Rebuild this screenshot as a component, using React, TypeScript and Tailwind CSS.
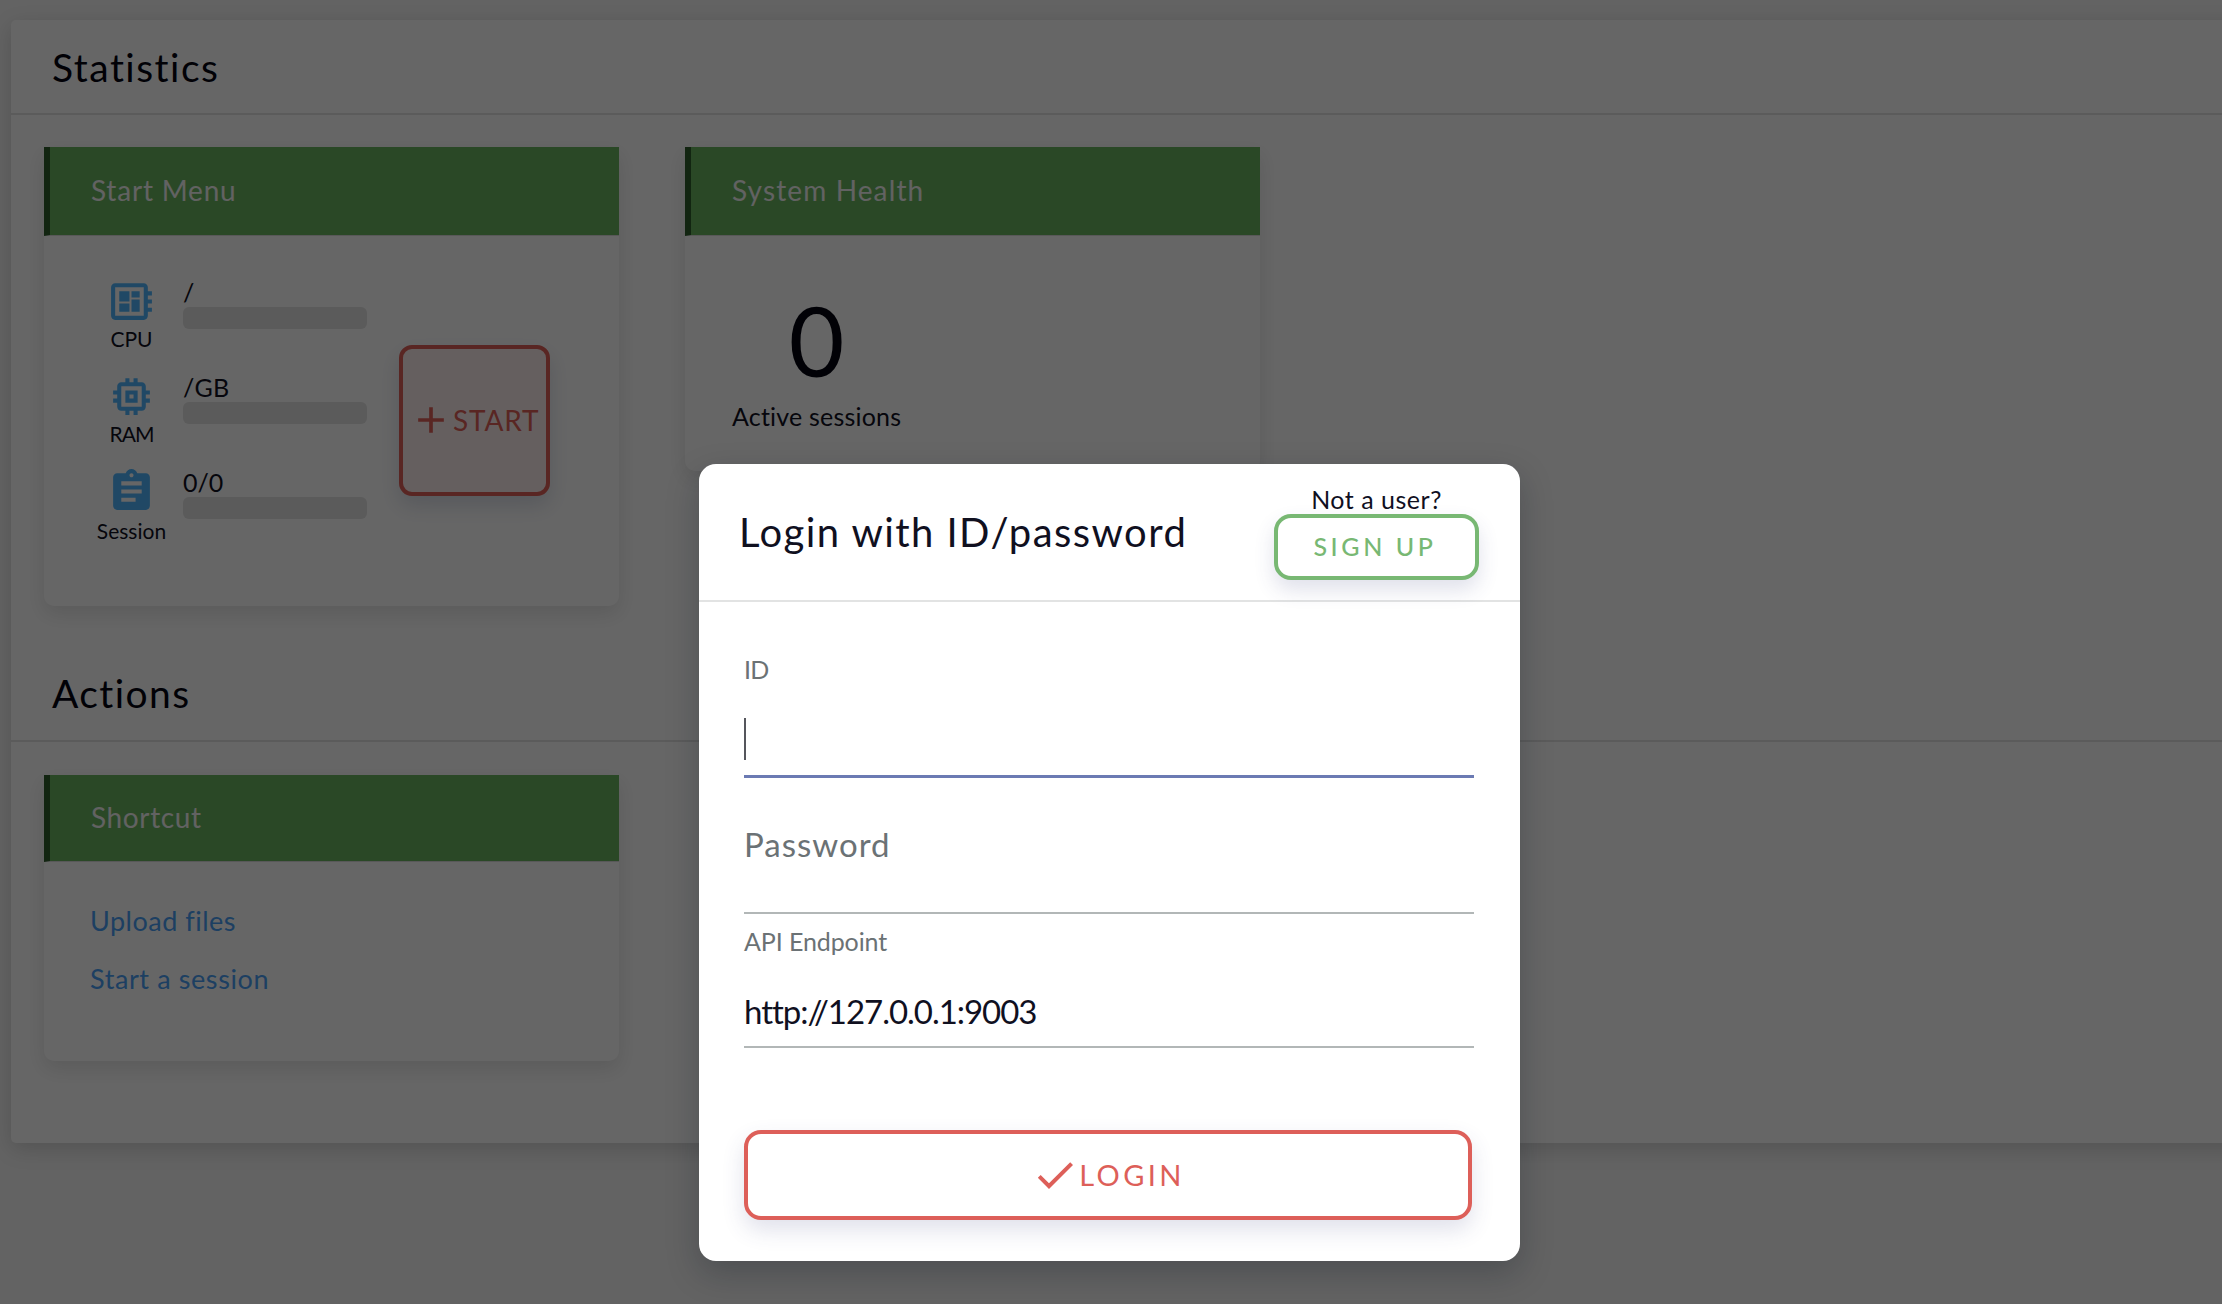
import React from "react";
import type { IconType } from "react-icons";
import { MdAdd, MdAssignment, MdCheck, MdDeveloperBoard, MdMemory } from "react-icons/md";

function SectionHeader({ title, className }: { title: string; className: string }) {
  return (
    <div className="flex h-[95px] items-start border-b-2 border-[#e4e4e4] pl-[41px]">
      <h2 className={"text-[39px] leading-10 text-[#040410] " + className}>{title}</h2>
    </div>
  );
}

function Card({
  title,
  titleClass,
  headClass = "h-[89px] pt-[29px]",
  className,
  children,
}: {
  title: string;
  titleClass: string;
  headClass?: string;
  className: string;
  children: React.ReactNode;
}) {
  return (
    <div
      className={
        "w-[575px] shrink-0 rounded-b-[10px] bg-white shadow-[0_8px_20px_rgba(0,0,0,0.11)] " + className
      }
    >
      <div className={"border-b border-l-6 border-b-[#dddddd] border-l-[#2f5c2c] bg-[#69b45f] pl-[41px] " + headClass}>
        <h3 className={"text-[28px] leading-7 text-[#f4f4f4] " + titleClass}>{title}</h3>
      </div>
      {children}
    </div>
  );
}

function Metric({
  Icon,
  label,
  labelClass,
  value,
  valueClass,
}: {
  Icon: IconType;
  label: string;
  labelClass: string;
  value: string;
  valueClass: string;
}) {
  return (
    <div className="flex h-[74px]">
      <div className="flex w-[73px] flex-col items-center">
        <Icon className="size-[49px] shrink-0 text-[#50b5fc]" />
        <span className={"text-[21px] leading-[25px] " + labelClass}>{label}</span>
      </div>
      <div className="ml-[15px] w-[184px]">
        <div className={"text-[25px] leading-[30px] " + valueClass}>{value}</div>
        <div className="h-[22px] rounded-md bg-[#e3e3e3]" />
      </div>
    </div>
  );
}

function Dashboard() {
  return (
    <div className="h-full bg-[#f7f7f7] pt-5 pl-[11px]">
      <div className="-mr-10 h-[1123px] rounded-l-[5px] bg-white shadow-[0_6px_22px_rgba(0,0,0,0.16)]">
        <SectionHeader title="Statistics" className="mt-[27px] tracking-[1.5px]" />
        <div className="mt-8 flex items-start gap-[66px] pl-[33px]">
          <Card title="Start Menu" titleClass="tracking-[0.8px]" className="h-[459px]">
            <div className="flex pt-[41px] pl-[51px]">
              <div className="flex flex-col gap-[21px]">
                <Metric Icon={MdDeveloperBoard} label="CPU" labelClass="" value="/" valueClass="" />
                <Metric
                  Icon={MdMemory}
                  label="RAM"
                  labelClass="tracking-[-1px]"
                  value="/GB"
                  valueClass="tracking-[0.3px]"
                />
                <Metric
                  Icon={MdAssignment}
                  label="Session"
                  labelClass="mt-[2px]"
                  value="0/0"
                  valueClass=""
                />
              </div>
              <button className="mt-[68px] ml-8 flex size-[151px] items-center rounded-[13px] border-4 border-[#de5f58] bg-[#fdeeed] pb-px pl-[6px] text-[#de5f58] shadow-[0_10px_20px_rgba(60,80,130,0.18)]">
                <MdAdd className="size-11 shrink-0" />
                <span className="text-[28px] leading-8 tracking-[0.85px]">START</span>
              </button>
            </div>
          </Card>
          <Card title="System Health" titleClass="tracking-[1.13px]" className="h-[324px]">
            <div className="flex pt-[56px] pl-[47px]">
              <div className="flex flex-col items-center">
                <span className="text-[96px] leading-[96px] text-[#040410]">0</span>
                <span className="mt-[13px] text-[25px] leading-[30px] tracking-[0.2px]">Active sessions</span>
              </div>
            </div>
          </Card>
        </div>
        <div className="mt-[41px]">
          <SectionHeader title="Actions" className="mt-[26px] tracking-[1.43px]" />
        </div>
        <div className="mt-[33px] pl-[33px]">
          <Card
            title="Shortcut"
            titleClass="tracking-[0.63px]"
            headClass="h-[87px] pt-[28px]"
            className="h-[286px]"
          >
            <div className="flex flex-col gap-[28px] pt-[44px] pl-[46px] text-[27px] leading-[30px] text-[#4a9ff5]">
              <a className="tracking-[0.5px]">Upload files</a>
              <a className="tracking-[0.6px]">Start a session</a>
            </div>
          </Card>
        </div>
      </div>
    </div>
  );
}

function LoginDialog() {
  return (
    <div className="h-[797px] w-[821px] rounded-[17px] bg-white shadow-[0_12px_32px_rgba(10,20,30,0.25)]">
      <div className="flex h-[138px] items-start justify-between border-b-2 border-[#e2e3e3] pr-[41px] pl-10">
        <h1 className="mt-[44px] text-[40px] leading-[48px] tracking-[1.43px]">Login with ID/password</h1>
        <div className="mt-5 flex w-[205px] flex-col items-center">
          <span className="text-[25px] leading-[30px] tracking-[0.51px]">Not a user?</span>
          <button className="h-[66px] w-full rounded-[17px] border-4 border-[#78b873] bg-white pr-[3px] text-[25px] font-medium tracking-[3.6px] text-[#78b873] shadow-[0_10px_20px_rgba(60,70,130,0.16)]">
            SIGN UP
          </button>
        </div>
      </div>
      <div className="flex flex-col px-[45px] pt-[52px]">
        <label className="text-[25px] leading-[30px] tracking-[-0.8px] text-[#6b7275]">ID</label>
        <div className="mt-[34px] h-[42px] w-[2px] bg-[#55565c]" />
        <div className="mt-[15px] h-[3px] w-[730px] bg-[#6b7ab3]" />
        <label className="mt-[46px] text-[33px] leading-10 tracking-[1px] text-[#6b7275]">Password</label>
        <div className="mt-12 h-[2px] w-[730px] bg-[#b2b7b7]" />
        <label className="mt-3 text-[25px] leading-[30px] tracking-[-0.1px] text-[#6b7275]">API Endpoint</label>
        <div className="mt-[35px] text-[33px] leading-10 tracking-[-1.03px]">http://127.0.0.1:9003</div>
        <div className="mt-[15px] h-[2px] w-[730px] bg-[#b2b7b7]" />
        <button className="mt-[82px] flex h-[90px] w-[728px] items-center justify-center rounded-[17px] border-4 border-[#dd5f59] bg-white text-[#dd5f59] shadow-[0_10px_22px_rgba(60,70,130,0.16)]">
          <MdCheck className="size-12" />
          <span className="text-[29px] leading-8 tracking-[3.39px]">LOGIN</span>
        </button>
      </div>
    </div>
  );
}

export default function App() {
  return (
    <div className="relative h-[1304px] w-full overflow-hidden font-['Lato',sans-serif] text-[#10101f]">
      <Dashboard />
      <div className="absolute inset-0 bg-black/60 pt-[464px] pl-[699px]">
        <LoginDialog />
      </div>
    </div>
  );
}
